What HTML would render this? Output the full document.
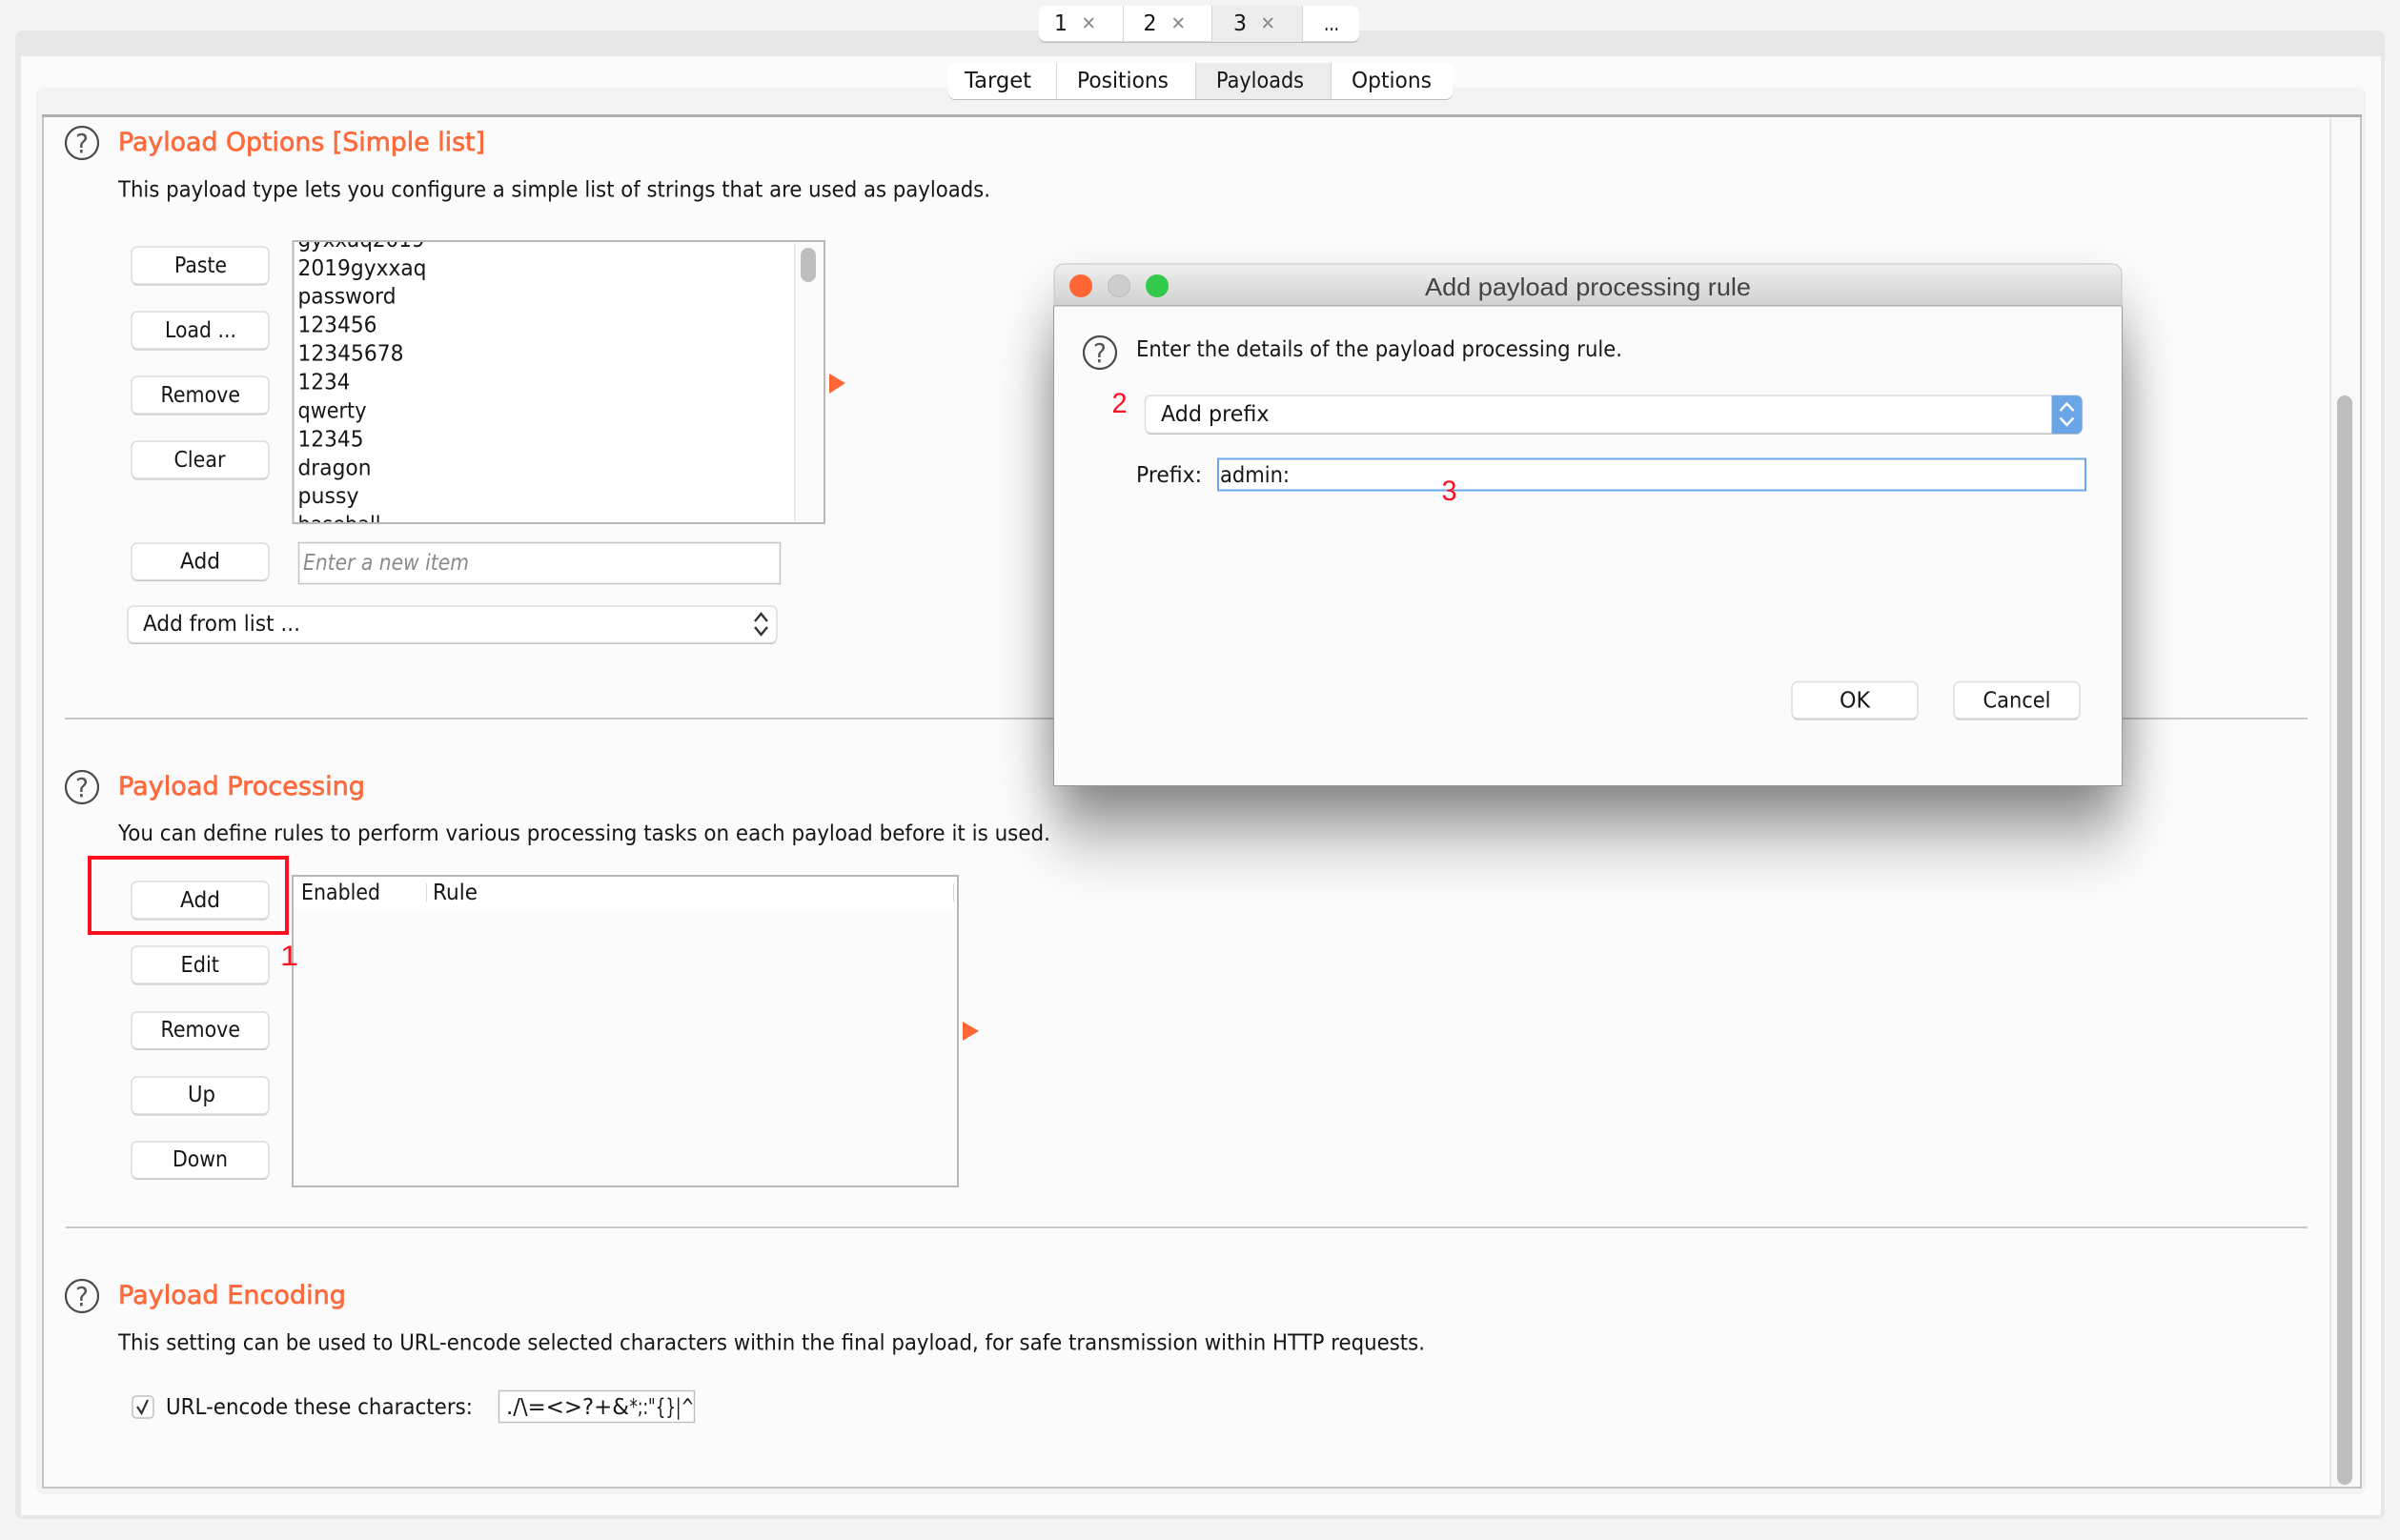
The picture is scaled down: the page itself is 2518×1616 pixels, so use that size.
<!DOCTYPE html>
<html><head><meta charset="utf-8"><title>Add payload processing rule</title>
<style>
html,body{margin:0;padding:0;background:#f3f3f3;width:2518px;height:1616px;overflow:hidden}
svg{display:block}
text{font-family:"DejaVu Sans","Liberation Sans",sans-serif;font-size:23px;fill:#161616}
.h{font-size:27px;fill:#ff6a3c;stroke:#ff6a3c;stroke-width:.7px}
.r{font-family:"Liberation Sans",sans-serif;font-size:30px;fill:#ff1020}
.t{font-family:"Liberation Sans",sans-serif;font-size:26px;fill:#444}
.i{font-style:italic;fill:#8a8a8a}
.b{fill:#fff;stroke:#dcdcdc;stroke-width:1.5}
.s{fill:#bdbdbd}
.q{fill:none;stroke:#4a4a4a;stroke-width:2.200}
.qt{font-size:28px;fill:#555}
.c{fill:none;stroke:#333;stroke-width:2.400}
.x{stroke:#888;stroke-width:1.800}
</style></head><body>
<svg width="2518" height="1616" viewBox="0 0 2518 1616" xmlns="http://www.w3.org/2000/svg">
<defs>
<filter id="sh" filterUnits="userSpaceOnUse" x="850" y="100" width="1650" height="1050"><feGaussianBlur stdDeviation="28 42"/></filter>
<clipPath id="lc"><rect x="308" y="254" width="525" height="294"/></clipPath>
<linearGradient id="tb" x1="0" y1="0" x2="0" y2="1"><stop offset="0" stop-color="#efefef"/><stop offset="1" stop-color="#d0d0d0"/></linearGradient>
</defs>

<!-- page frames -->
<rect width="2518" height="1616" fill="#f3f3f3"/>
<rect x="16" y="32" width="2486" height="1562" rx="8" fill="#e7e7e7"/>
<rect x="22" y="59" width="2476" height="1531" fill="#fbfbfb"/>
<rect x="38" y="92" width="2444" height="1476" rx="8" fill="#f3f3f3"/>
<rect x="45" y="121" width="2432" height="1440" fill="#fbfbfb" stroke="#c4c4c4" stroke-width="2"/>
<rect x="44" y="120" width="2434" height="3" fill="#b0b0b0"/>
<rect x="2444" y="124" width="28" height="1436" fill="#f8f8f8"/>
<rect x="2444" y="124" width="2" height="1436" fill="#e4e4e4"/>
<rect x="2452" y="415" width="16" height="1143" rx="8" fill="#bdbdbd"/>

<!-- request tabs -->
<rect x="1090" y="8" width="336" height="37" rx="7" fill="#bcbcbc"/>
<rect x="1090" y="6" width="336" height="37.500" rx="7" fill="#fff"/>
<rect x="1271" y="6" width="96" height="38" fill="#ececec"/>
<rect x="1178" y="6" width="1" height="38" fill="#d4d4d4"/><rect x="1271" y="6" width="1" height="38" fill="#d4d4d4"/><rect x="1366" y="6" width="1" height="38" fill="#d4d4d4"/>
<text x="1106" y="32" textLength="14" lengthAdjust="spacingAndGlyphs">1</text>
<line class="x" x1="1137.500" y1="19" x2="1147" y2="29"/><line class="x" x1="1147" y1="19" x2="1137.500" y2="29"/>
<text x="1199.500" y="32" textLength="14" lengthAdjust="spacingAndGlyphs">2</text>
<line class="x" x1="1231.500" y1="19" x2="1241" y2="29"/><line class="x" x1="1241" y1="19" x2="1231.500" y2="29"/>
<text x="1294" y="32" textLength="14" lengthAdjust="spacingAndGlyphs">3</text>
<line class="x" x1="1325.500" y1="19" x2="1335" y2="29"/><line class="x" x1="1335" y1="19" x2="1325.500" y2="29"/>
<text x="1389" y="32" textLength="16" lengthAdjust="spacingAndGlyphs">...</text>

<!-- sub tabs -->
<rect x="995" y="68" width="529" height="37" rx="7" fill="#bcbcbc"/>
<rect x="995" y="66" width="529" height="38" rx="7" fill="#fff"/>
<rect x="1254" y="66" width="142" height="38" fill="#ececec"/>
<rect x="1108" y="66" width="1" height="38" fill="#d4d4d4"/><rect x="1254" y="66" width="1" height="38" fill="#d4d4d4"/><rect x="1396" y="66" width="1" height="38" fill="#d4d4d4"/>
<text x="1012" y="92" textLength="70" lengthAdjust="spacingAndGlyphs">Target</text>
<text x="1130" y="92" textLength="96" lengthAdjust="spacingAndGlyphs">Positions</text>
<text x="1276" y="92" textLength="92" lengthAdjust="spacingAndGlyphs">Payloads</text>
<text x="1418" y="92" textLength="84" lengthAdjust="spacingAndGlyphs">Options</text>

<!-- section 1 -->
<circle class="q" cx="86" cy="150" r="17"/><text class="qt" x="79" y="160" textLength="14" lengthAdjust="spacingAndGlyphs">?</text>
<text class="h" x="124" y="158" textLength="385" lengthAdjust="spacingAndGlyphs">Payload Options [Simple list]</text>
<text x="124" y="206.500" textLength="915" lengthAdjust="spacingAndGlyphs">This payload type lets you configure a simple list of strings that are used as payloads.</text>

<rect class="s" x="138" y="261" width="144" height="38.500" rx="6"/><rect class="b" x="138" y="259" width="144" height="39" rx="6"/>
<text x="183" y="286" textLength="55" lengthAdjust="spacingAndGlyphs">Paste</text>
<rect class="s" x="138" y="329" width="144" height="38.500" rx="6"/><rect class="b" x="138" y="327" width="144" height="39" rx="6"/>
<text x="173" y="354" textLength="75" lengthAdjust="spacingAndGlyphs">Load ...</text>
<rect class="s" x="138" y="397" width="144" height="38.500" rx="6"/><rect class="b" x="138" y="395" width="144" height="39" rx="6"/>
<text x="168.500" y="422" textLength="83.500" lengthAdjust="spacingAndGlyphs">Remove</text>
<rect class="s" x="138" y="465" width="144" height="38.500" rx="6"/><rect class="b" x="138" y="463" width="144" height="39" rx="6"/>
<text x="182.500" y="490" textLength="54" lengthAdjust="spacingAndGlyphs">Clear</text>
<rect class="s" x="138" y="572" width="144" height="38" rx="6"/><rect class="b" x="138" y="570" width="144" height="38.500" rx="6"/>
<text x="189" y="596.500" textLength="42" lengthAdjust="spacingAndGlyphs">Add</text>

<rect x="307.500" y="253" width="557.500" height="296" fill="#fff" stroke="#b8b8b8" stroke-width="2"/>
<rect x="833" y="255" width="31" height="292" fill="#fafafa"/>
<rect x="833" y="255" width="1.500" height="292" fill="#e2e2e2"/>
<rect x="840" y="260" width="16" height="36" rx="8" fill="#bdbdbd"/>
<g clip-path="url(#lc)">
<text x="312.500" y="259" textLength="133" lengthAdjust="spacingAndGlyphs">gyxxaq2019</text>
<text x="312.500" y="289" textLength="135" lengthAdjust="spacingAndGlyphs">2019gyxxaq</text>
<text x="312.500" y="318.500" textLength="103" lengthAdjust="spacingAndGlyphs">password</text>
<text x="312.500" y="348.500" textLength="83" lengthAdjust="spacingAndGlyphs">123456</text>
<text x="312.500" y="378.500" textLength="111" lengthAdjust="spacingAndGlyphs">12345678</text>
<text x="312.500" y="408.500" textLength="55" lengthAdjust="spacingAndGlyphs">1234</text>
<text x="312.500" y="438.500" textLength="72" lengthAdjust="spacingAndGlyphs">qwerty</text>
<text x="312.500" y="468.500" textLength="69" lengthAdjust="spacingAndGlyphs">12345</text>
<text x="312.500" y="498.500" textLength="77" lengthAdjust="spacingAndGlyphs">dragon</text>
<text x="312.500" y="528" textLength="64" lengthAdjust="spacingAndGlyphs">pussy</text>
<text x="312.500" y="558" textLength="87" lengthAdjust="spacingAndGlyphs">baseball</text>
</g>
<polygon points="870,392 887,402 870,413" fill="#ff6633"/>

<rect x="313.500" y="569.500" width="505" height="43" fill="#fff" stroke="#c4c4c4" stroke-width="1.500"/>
<text class="i" x="318" y="598" textLength="174" lengthAdjust="spacingAndGlyphs">Enter a new item</text>

<rect class="s" x="134" y="638" width="681" height="38" rx="6"/><rect class="b" x="134" y="636" width="681" height="38.500" rx="6"/>
<text x="150" y="662" textLength="165" lengthAdjust="spacingAndGlyphs">Add from list ...</text>
<path class="c" d="M792 652 L798.500 644 L805 652 M792 658 L798.500 666 L805 658"/>

<rect x="68" y="753" width="2353" height="2" fill="#c8c8c8"/>

<!-- section 2 -->
<circle class="q" cx="86" cy="826" r="17"/><text class="qt" x="79" y="836" textLength="14" lengthAdjust="spacingAndGlyphs">?</text>
<text class="h" x="124" y="834" textLength="259" lengthAdjust="spacingAndGlyphs">Payload Processing</text>
<text x="124" y="882" textLength="978" lengthAdjust="spacingAndGlyphs">You can define rules to perform various processing tasks on each payload before it is used.</text>

<rect class="s" x="138" y="927" width="144" height="38.500" rx="6"/><rect class="b" x="138" y="925" width="144" height="39" rx="6"/>
<text x="189" y="952" textLength="42" lengthAdjust="spacingAndGlyphs">Add</text>
<rect class="s" x="138" y="995" width="144" height="38.500" rx="6"/><rect class="b" x="138" y="993" width="144" height="39" rx="6"/>
<text x="189.500" y="1020" textLength="40.500" lengthAdjust="spacingAndGlyphs">Edit</text>
<rect class="s" x="138" y="1064" width="144" height="38" rx="6"/><rect class="b" x="138" y="1062" width="144" height="38.500" rx="6"/>
<text x="168.500" y="1088" textLength="83.500" lengthAdjust="spacingAndGlyphs">Remove</text>
<rect class="s" x="138" y="1132" width="144" height="38.500" rx="6"/><rect class="b" x="138" y="1130" width="144" height="39" rx="6"/>
<text x="197" y="1156" textLength="29" lengthAdjust="spacingAndGlyphs">Up</text>
<rect class="s" x="138" y="1200" width="144" height="38" rx="6"/><rect class="b" x="138" y="1198" width="144" height="38.500" rx="6"/>
<text x="181" y="1224" textLength="58" lengthAdjust="spacingAndGlyphs">Down</text>

<rect x="307" y="919" width="698" height="326" fill="#fbfbfb" stroke="#b8b8b8" stroke-width="2"/>
<rect x="308" y="920" width="696" height="33" fill="#fff"/>
<rect x="447" y="927" width="1" height="19" fill="#d8d8d8"/><rect x="1000" y="927" width="1" height="19" fill="#d8d8d8"/>
<text x="316" y="944" textLength="83" lengthAdjust="spacingAndGlyphs">Enabled</text>
<text x="454" y="944" textLength="47" lengthAdjust="spacingAndGlyphs">Rule</text>
<polygon points="1010,1072 1027,1082 1010,1092" fill="#ff6633"/>

<rect x="94" y="900" width="207" height="79" fill="none" stroke="#ff1020" stroke-width="4"/>
<text class="r" x="294" y="1013" textLength="19" lengthAdjust="spacingAndGlyphs">1</text>

<rect x="69" y="1287" width="2352" height="2" fill="#c8c8c8"/>

<!-- section 3 -->
<circle class="q" cx="86" cy="1360" r="17"/><text class="qt" x="79" y="1370" textLength="14" lengthAdjust="spacingAndGlyphs">?</text>
<text class="h" x="124" y="1368" textLength="239" lengthAdjust="spacingAndGlyphs">Payload Encoding</text>
<text x="124" y="1416.500" textLength="1371" lengthAdjust="spacingAndGlyphs">This setting can be used to URL-encode selected characters within the final payload, for safe transmission within HTTP requests.</text>
<rect x="139" y="1465" width="22" height="23" rx="4" fill="#fff" stroke="#c0c0c0" stroke-width="1.500"/>
<path d="M144 1476 L148.500 1483 L155 1469" fill="none" stroke="#333" stroke-width="2.200"/>
<text x="174" y="1484" textLength="322" lengthAdjust="spacingAndGlyphs">URL-encode these characters:</text>
<rect x="523.500" y="1459.500" width="205" height="33" fill="#fff" stroke="#c0c0c0" stroke-width="1.500"/>
<text x="531" y="1484" textLength="129" lengthAdjust="spacingAndGlyphs">./\=&lt;&gt;?+&amp;</text>
<text x="660.500" y="1484" textLength="68" lengthAdjust="spacingAndGlyphs">*;:"{}|^</text>

<!-- dialog -->
<rect x="1106" y="340" width="1120" height="519" fill="#000" opacity=".55" filter="url(#sh)"/>
<rect x="1105" y="321" width="1122" height="504" fill="#999"/>
<rect x="1106" y="321" width="1120" height="503" fill="#fbfbfb"/>
<path d="M1106 321 V287 a10 10 0 0 1 10 -10 H2216 a10 10 0 0 1 10 10 V321 Z" fill="url(#tb)" stroke="#c4c4c4" stroke-width="1"/>
<rect x="1106" y="320" width="1120" height="1.500" fill="#b0b0b0"/>
<circle cx="1134" cy="300" r="12" fill="#ff6633"/>
<circle cx="1174" cy="300" r="11.500" fill="#cdcdcd" stroke="#bbb"/>
<circle cx="1214" cy="300" r="12" fill="#33c94a"/>
<text class="t" x="1495" y="310" textLength="342" lengthAdjust="spacingAndGlyphs">Add payload processing rule</text>

<circle class="q" cx="1154" cy="370" r="17"/><text class="qt" x="1147" y="380" textLength="14" lengthAdjust="spacingAndGlyphs">?</text>
<text x="1192" y="374" textLength="510" lengthAdjust="spacingAndGlyphs">Enter the details of the payload processing rule.</text>
<text class="r" x="1166.500" y="433" textLength="16" lengthAdjust="spacingAndGlyphs">2</text>

<rect class="s" x="1201.500" y="417" width="983" height="39" rx="6"/><rect class="b" x="1201.500" y="415" width="983" height="39.500" rx="6"/>
<path d="M2152.500 415 H2178.500 a6 6 0 0 1 6 6 V449 a6 6 0 0 1 -6 6 H2152.500 Z" fill="#6aa5e8"/>
<path d="M2161.500 431 L2168.500 423.500 L2175.500 431 M2161.500 438.500 L2168.500 446 L2175.500 438.500" fill="none" stroke="#fff" stroke-width="2.400"/>
<text x="1218" y="442" textLength="113.500" lengthAdjust="spacingAndGlyphs">Add prefix</text>

<text x="1192" y="506" textLength="69" lengthAdjust="spacingAndGlyphs">Prefix:</text>
<rect x="1278" y="481.500" width="910" height="33" fill="#fff" stroke="#6aa8ee" stroke-width="2"/>
<text x="1280" y="506" textLength="73" lengthAdjust="spacingAndGlyphs">admin:</text>
<text class="r" x="1512.500" y="525" textLength="16" lengthAdjust="spacingAndGlyphs">3</text>

<rect class="s" x="1880" y="717.500" width="132" height="38" rx="6"/><rect class="b" x="1880" y="715.500" width="132" height="38.500" rx="6"/>
<text x="1930" y="742.500" textLength="32" lengthAdjust="spacingAndGlyphs">OK</text>
<rect class="s" x="2050" y="717.500" width="132" height="38" rx="6"/><rect class="b" x="2050" y="715.500" width="132" height="38.500" rx="6"/>
<text x="2080.500" y="742.500" textLength="71" lengthAdjust="spacingAndGlyphs">Cancel</text>
</svg>
</body></html>
